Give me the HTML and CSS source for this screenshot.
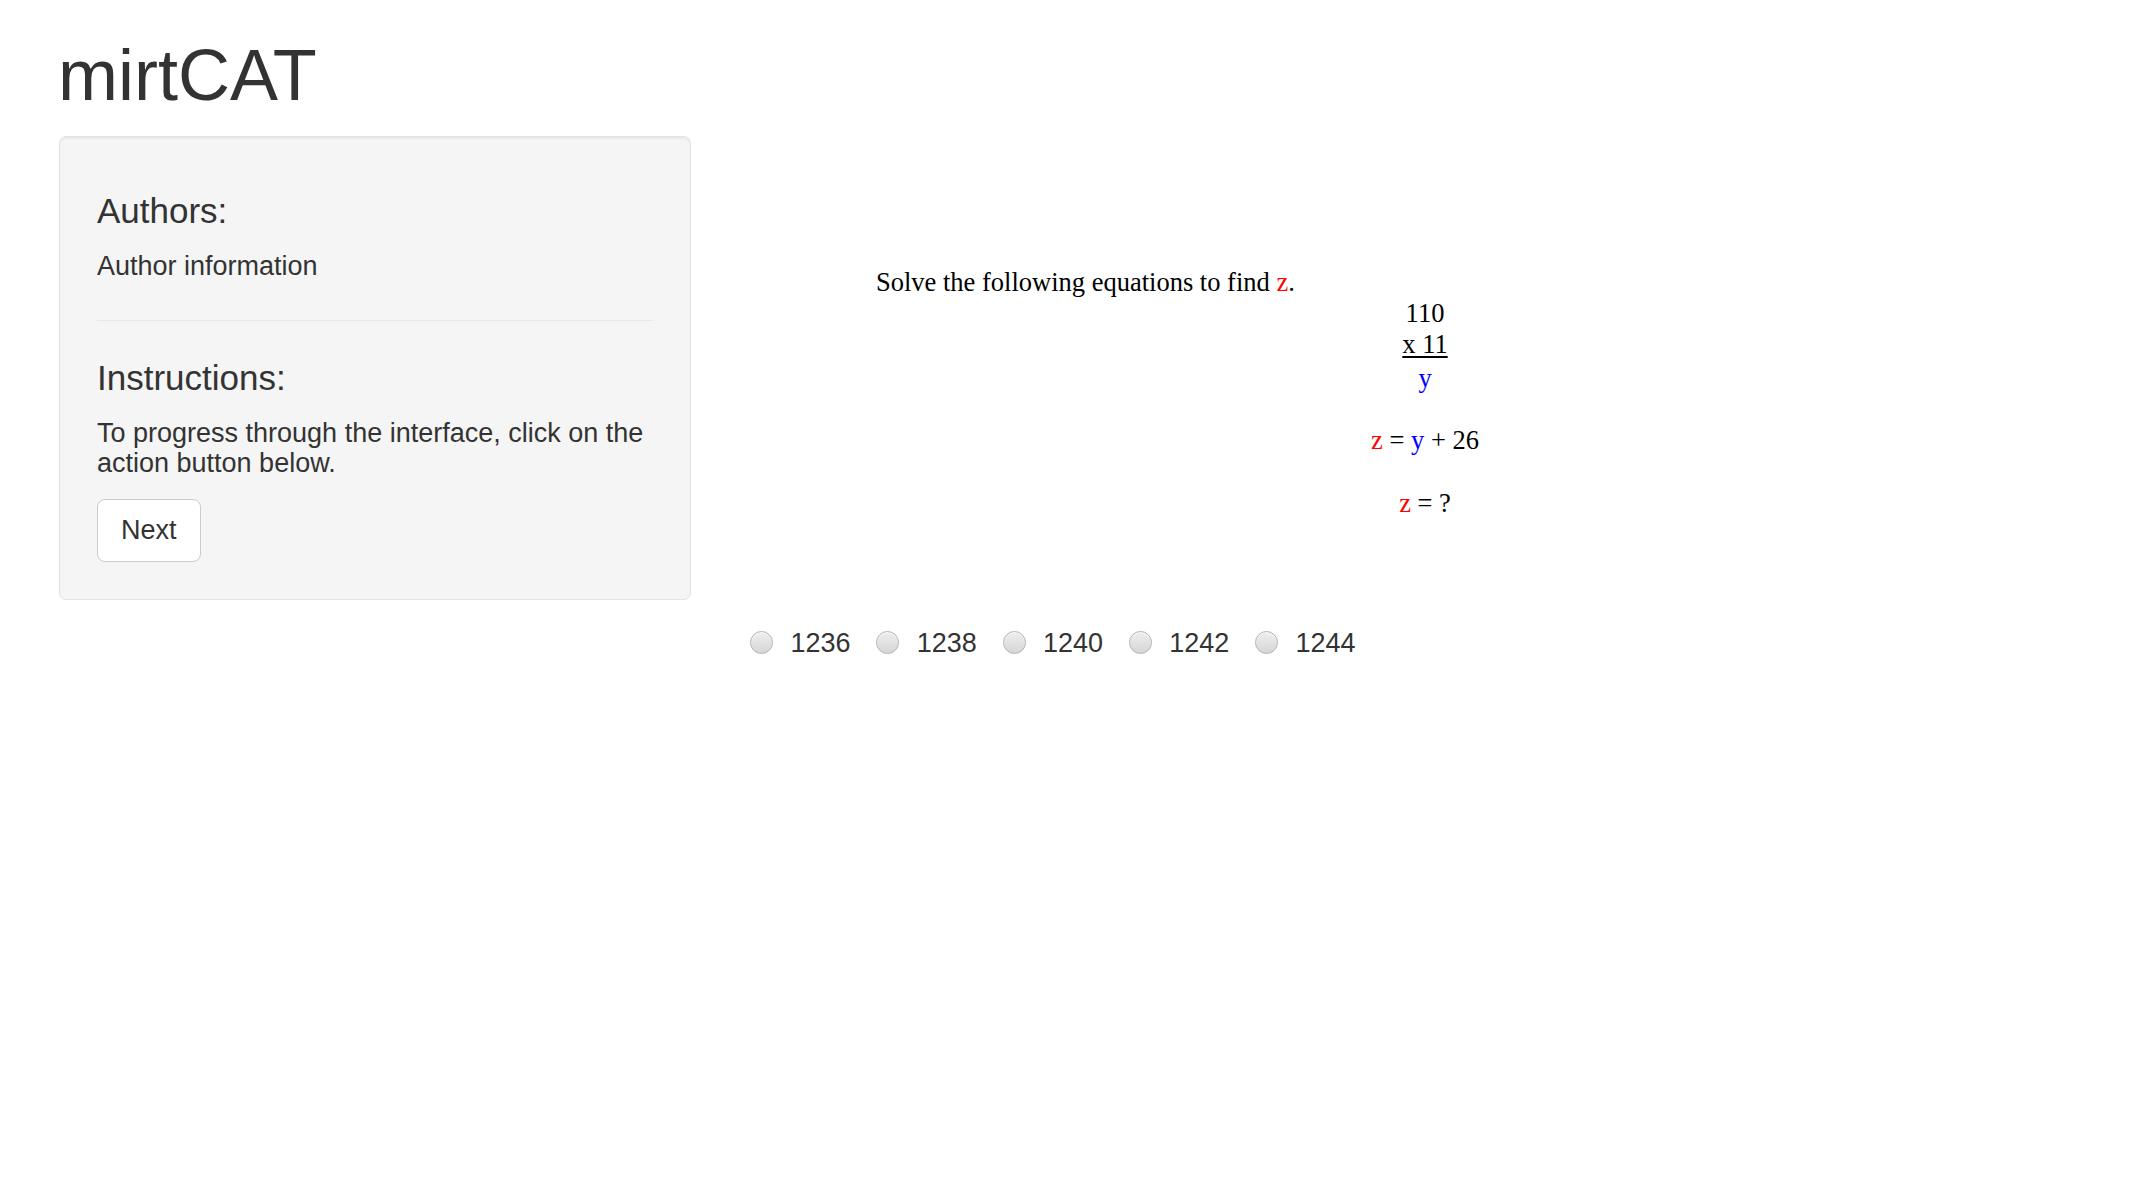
FILE: index.html
```html
<!DOCTYPE html>
<html lang="en">
<head>
<meta charset="utf-8">
<title>mirtCAT</title>
<link rel="stylesheet" href="styles.css">
</head>
<body>
<div class="page">
  <h1 class="title">mirtCAT</h1>
  <div class="layout">
    <aside class="sidebar">
      <div class="well">
        <h4 class="heading">Authors:</h4>
        <p class="info">Author information</p>
        <hr class="sep">
        <h4 class="heading">Instructions:</h4>
        <p class="info">To progress through the interface, click on the action button below.</p>
        <button class="btn" type="button">Next</button>
      </div>
    </aside>
    <main class="main">
      <div class="question">
        <p class="prompt">Solve the following equations to find <span class="red">z</span>.</p>
        <div class="math">
          <div class="line">110</div>
          <div class="line"><span class="under">x 11</span></div>
          <div class="line result blue">y</div>
          <div class="line eq1"><span class="red">z</span> = <span class="blue">y</span> + 26</div>
          <div class="line eq2"><span class="red">z</span> = ?</div>
        </div>
      </div>
      <div class="choices">
        <label class="choice"><input class="radio" type="radio" name="answer" value="1236"><span>1236</span></label>
        <label class="choice"><input class="radio" type="radio" name="answer" value="1238"><span>1238</span></label>
        <label class="choice"><input class="radio" type="radio" name="answer" value="1240"><span>1240</span></label>
        <label class="choice"><input class="radio" type="radio" name="answer" value="1242"><span>1242</span></label>
        <label class="choice"><input class="radio" type="radio" name="answer" value="1244"><span>1244</span></label>
      </div>
    </main>
  </div>
</div>
</body>
</html>
```

FILE: styles.css
```css
html, body {
  margin: 0;
  padding: 0;
  background: #ffffff;
}

body {
  font-family: "Liberation Sans", Arial, sans-serif;
  color: #333333;
  font-size: 27px;
  line-height: 30px;
}

.page {
  padding: 0 0 0 59px;
}

.title {
  font-family: "Liberation Sans", Arial, sans-serif;
  font-weight: 500;
  font-size: 72px;
  line-height: 79px;
  color: #333333;
  margin: 36px 0 21px -1px;
}

.layout {
  display: flex;
  align-items: flex-start;
}

.sidebar {
  flex: 0 0 632px;
  width: 632px;
}

.well {
  box-sizing: border-box;
  width: 632px;
  background: #f5f5f5;
  border: 1px solid #e3e3e3;
  border-radius: 7px;
  box-shadow: inset 0 2px 2px rgba(0, 0, 0, 0.05);
  padding: 37px 37px 37px 37px;
}

.heading {
  font-family: "Liberation Sans", Arial, sans-serif;
  font-weight: 500;
  font-size: 35px;
  line-height: 38.5px;
  margin: 18px 0 0 0;
  color: #333333;
}

.info {
  margin: 20px 0 0 0;
  font-size: 27px;
  line-height: 30px;
}

.sep {
  border: 0;
  border-top: 1px solid #e8e8e8;
  margin: 39px 0 0 0;
  height: 0;
}

.sep + .heading {
  margin-top: 38.6px;
}

.btn {
  display: block;
  margin-top: 21px;
  box-sizing: border-box;
  height: 63px;
  padding: 0 23px;
  background: #ffffff;
  border: 1px solid #cccccc;
  border-radius: 8px;
  font-family: "Liberation Sans", Arial, sans-serif;
  font-size: 27px;
  line-height: 61px;
  color: #333333;
  cursor: pointer;
}

.main {
  flex: 1 1 auto;
  padding: 0 29px 0 49px;
}

.question {
  margin-top: 131.2px;
  font-family: "Liberation Serif", "Times New Roman", serif;
  font-size: 26.5px;
  line-height: 31px;
  color: #000000;
}

.prompt {
  margin: 0;
  padding-left: 136px;
}

.math {
  text-align: center;
  padding-left: 6px;
}

.line {
  height: 31px;
}

.under {
  text-decoration: underline;
  text-underline-offset: 3px;
}

.result {
  margin-top: 2.5px;
}

.eq1 {
  margin-top: 31.1px;
}

.eq2 {
  margin-top: 32.6px;
}

.red {
  color: #ff0000;
}

.blue {
  color: #0000ff;
}

.choices {
  display: flex;
  align-items: center;
  gap: 25.7px;
  margin-top: 108.6px;
  padding-left: 10px;
}

.choice {
  display: flex;
  align-items: center;
  gap: 17.5px;
  font-family: "Liberation Sans", Arial, sans-serif;
  font-size: 27px;
  line-height: 30px;
  color: #333333;
  cursor: pointer;
}

.radio {
  appearance: none;
  -webkit-appearance: none;
  margin: 0;
  width: 23px;
  height: 23px;
  border-radius: 50%;
  border: 1px solid #b3b3b3;
  background: linear-gradient(#eeeeee, #d6d6d6);
  box-shadow: inset 0 1px 1px rgba(255, 255, 255, 0.8);
  box-sizing: border-box;
}
```
